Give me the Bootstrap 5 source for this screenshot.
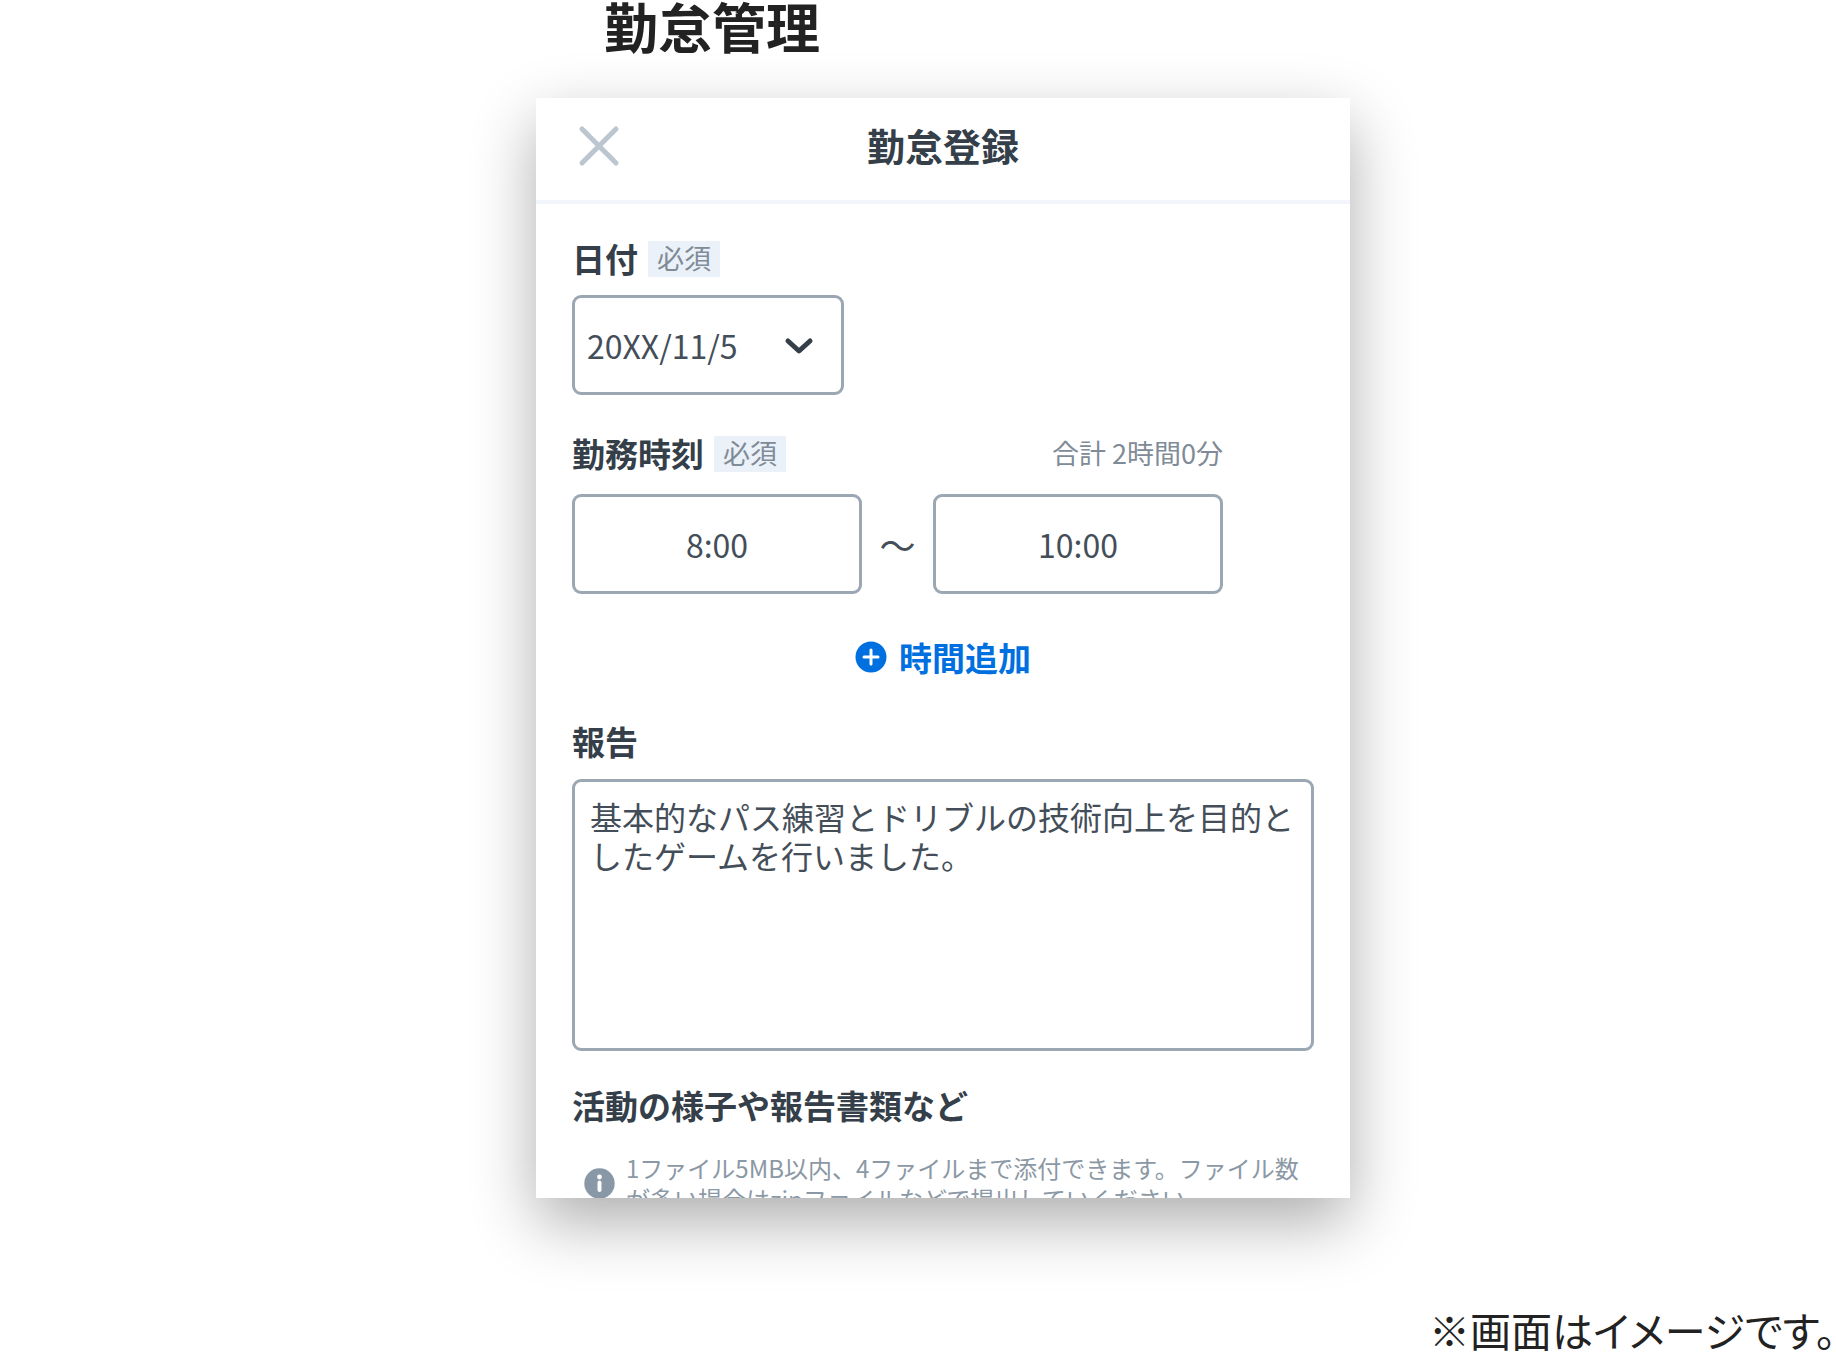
<!DOCTYPE html>
<html lang="ja">
<head>
<meta charset="utf-8">
<meta name="viewport" content="width=device-width, initial-scale=1">
<title>勤怠管理</title>
<link href="https://cdn.jsdelivr.net/npm/bootstrap@5.3.0/dist/css/bootstrap.min.css" rel="stylesheet">
<style>
  body { font-family: "Noto Sans CJK JP", sans-serif; color: #343f4a; background: #fff; }
  .page-wrap { padding-left: 50px; }
  .screen-col { max-width: 814px; }
  .page-title { font-size: 54px; line-height: 52px; color: #222; padding: 0 68px 46px; }
  .phone-screen { aspect-ratio: 814 / 1100; box-shadow: 0 24px 60px rgba(0, 0, 0, .32); }
  .screen-head { display: grid; grid-template-columns: 1fr auto 1fr; padding: 22px 36px 28px; border-bottom: 4px solid #f2f6fa; }
  .screen-name { font-size: 38px; line-height: 48px; padding-bottom: 2px; }
  .close-btn { width: 54px; height: 52px; }
  .screen-body { padding: 37px 36px 0; }
  .field-label { font-size: 33px; line-height: 34px; font-weight: 700; }
  .label-row { gap: 10px; }
  .req-tag { font-size: 27px; line-height: 34px; height: 36px; padding: 0 9px; color: #7f8b97; background: #ebf1f8; }
  .total-time { font-size: 27px; line-height: 34px; color: #7f8b97; }
  .field-box { height: 100px; border: 3px solid #9ba7b3; border-radius: 9px; font-size: 32px; color: #444e59; background: #fff; }
  .date-pick { width: 272px; margin-top: 18px; }
  .date-pick select { appearance: none; padding: 0 70px 0 12px; }
  .date-pick svg { right: 30px; top: 42px; }
  .time-block { margin-top: 41px; max-width: 651px; }
  .time-row { margin-top: 22px; }
  .tilde { width: 71px; font-size: 36px; color: #444e59; }
  .add-btn { margin: 39px 0 43px; height: 48px; font-size: 33px; line-height: 44px; gap: 12px; color: #0070e0; }
  textarea.field-box { height: 272px; margin-top: 21px; padding: 15px 0 15px 15px; line-height: 39px; resize: none; overflow: hidden; }
  .files-title { margin-top: 37px; }
  .info-note { margin-top: 30px; padding-left: 12px; gap: 11px; font-size: 24px; line-height: 31px; color: #8b98a5; }
  .caption-note { margin-top: 109px; font-size: 41px; line-height: 44px; color: #222; font-feature-settings: "palt"; }
</style>
</head>
<body>
<main class="page-wrap">
  <div class="screen-col mx-auto">
    <h1 class="page-title fw-bold mb-0">勤怠管理</h1>
    <section class="phone-screen bg-white overflow-hidden">
      <header class="screen-head align-items-center">
        <button type="button" class="close-btn btn p-0 border-0 d-flex align-items-center justify-content-center" aria-label="閉じる">
          <svg width="42" height="42" viewBox="0 0 42 42" fill="none" stroke="#bcc6d0" stroke-width="5" stroke-linecap="round"><path d="M4 4l34 34M38 4L4 38"/></svg>
        </button>
        <h2 class="screen-name fw-bold mb-0">勤怠登録</h2>
      </header>
      <form class="screen-body">
        <div class="label-row d-flex align-items-start">
          <label class="field-label" for="workDate">日付</label>
          <span class="req-tag">必須</span>
        </div>
        <div class="date-pick position-relative">
          <select id="workDate" class="field-box w-100"><option>20XX/11/5</option></select>
          <svg class="position-absolute pe-none" width="30" height="18" viewBox="0 0 30 18" fill="none" stroke="#343f4a" stroke-width="5" stroke-linecap="round" stroke-linejoin="round"><path d="M4 4l11 10L26 4"/></svg>
        </div>

        <div class="time-block">
          <div class="label-row d-flex align-items-start">
            <label class="field-label" for="startTime">勤務時刻</label>
            <span class="req-tag">必須</span>
            <span class="total-time ms-auto">合計 2時間0分</span>
          </div>
          <div class="time-row d-flex align-items-center">
            <input id="startTime" class="field-box flex-fill w-50 text-center" type="text" value="8:00">
            <span class="tilde flex-shrink-0 text-center">～</span>
            <input class="field-box flex-fill w-50 text-center" type="text" value="10:00" aria-label="終了時刻">
          </div>
        </div>

        <button type="button" class="add-btn btn p-0 border-0 w-100 fw-bold d-flex align-items-center justify-content-center">
          <svg width="32" height="32" viewBox="0 0 32 32"><circle cx="16" cy="16" r="15.5" fill="#0070e0"/><path d="M16 9v14M9 16h14" stroke="#fff" stroke-width="3" stroke-linecap="round"/></svg>
          時間追加
        </button>

        <label class="field-label d-block" for="report">報告</label>
        <textarea id="report" class="field-box d-block w-100">基本的なパス練習とドリブルの技術向上を目的としたゲームを行いました。</textarea>

        <h3 class="field-label files-title mb-0">活動の様子や報告書類など</h3>
        <div class="info-note d-flex align-items-center">
          <svg class="flex-shrink-0" width="31" height="31" viewBox="0 0 31 31"><circle cx="15.5" cy="15.5" r="15.2" fill="#8998a7"/><circle cx="15.5" cy="9" r="2.4" fill="#fff"/><path d="M15.5 14.5v7.500" stroke="#fff" stroke-width="4" stroke-linecap="round"/></svg>
          <p class="mb-0">1ファイル5MB以内、4ファイルまで添付できます。ファイル数が多い場合はzipファイルなどで提出していください。</p>
        </div>
      </form>
    </section>
  </div>
</main>
<p class="caption-note text-end mb-0">※画面はイメージです。</p>
<script src="https://cdn.jsdelivr.net/npm/bootstrap@5.3.0/dist/js/bootstrap.bundle.min.js"></script>
</body>
</html>
